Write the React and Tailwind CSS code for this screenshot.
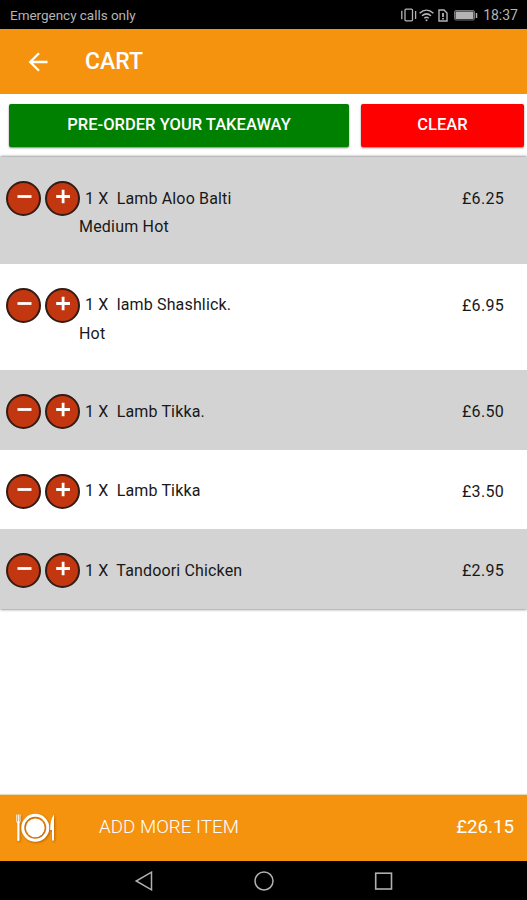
const items = [
  { name: 'Lamb Aloo Balti', note: 'Medium Hot', price: '£6.25' },
  { name: 'lamb Shashlick.', note: 'Hot', price: '£6.95' },
  { name: 'Lamb Tikka.', price: '£6.50' },
  { name: 'Lamb Tikka', price: '£3.50' },
  { name: 'Tandoori Chicken', price: '£2.95' },
];

function StatusBar() {
  return (
    <div className="flex h-[29px] shrink-0 items-center justify-between bg-black pl-2.5 pr-[9px] pt-px text-[13.5px] text-[#b4b4b4]">
      <span className="tracking-[-0.03px]">Emergency calls only</span>
      <div className="flex items-center">
        <svg width="17" height="14" viewBox="0 0 17 14" fill="none" stroke="currentColor" strokeWidth="1.3">
          <rect x="5" y="1.2" width="7.5" height="11.6" rx="1" />
          <path d="M1.8 2.8v8.4M15.6 3v8" />
        </svg>
        <svg className="ml-0.5" width="15" height="13" viewBox="0 0 15 13" fill="none" stroke="currentColor" strokeWidth="1.5">
          <path d="M.6 4.2C4.8.4 10.2.4 14.4 4.2M3 6.8c2.8-2.4 6.2-2.4 9 0M5.3 9.2c1.4-1.2 3-1.2 4.4 0" />
          <circle cx="7.5" cy="11.2" r="1" fill="currentColor" stroke="none" />
        </svg>
        <svg className="ml-1" width="10" height="13" viewBox="0 0 10 13" fill="none" stroke="currentColor" strokeWidth="1.4">
          <path d="M1 1h5l3 3v8H1z" />
          <path d="M5 4v4M5 9v1.5" strokeWidth="1.8" />
        </svg>
        <svg className="ml-1.5" width="24" height="11" viewBox="0 0 24 11" fill="none" stroke="currentColor">
          <rect x="0.5" y="0.5" width="20" height="9.5" rx="1.5" stroke="#777" />
          <rect x="1.5" y="1.5" width="18" height="7.5" fill="currentColor" stroke="none" />
          <path d="M22.5 3v5" strokeWidth="1.5" />
        </svg>
        <span className="ml-[5px] text-sm">18:37</span>
      </div>
    </div>
  );
}

function QtyButton({ label, plus }) {
  return (
    <button aria-label={label} className="flex size-[35px] items-center justify-center rounded-full border-2 border-[#331c16] bg-[#c23610]">
      <svg className="size-[31px]" viewBox="0 0 31 31" fill="none" stroke="white" strokeWidth="2.8">
        <path d={plus ? 'M9.2 13.5H23M16.1 6.7v13.6' : 'M9.5 13.5h14'} />
      </svg>
    </button>
  );
}

function CartRow({ item, shaded, height }) {
  return (
    <div className={`flex items-start justify-between pl-1.5 pr-[23px] ${height} ${shaded ? 'bg-[#d3d3d3]' : 'bg-white'}`}>
      <div>
        <div className="flex items-center gap-[3.5px]">
          <QtyButton label="Remove one" />
          <QtyButton label="Add one" plus />
          <span className="ml-0.5 whitespace-pre tracking-[0.15px]">{`1 X  ${item.name}`}</span>
        </div>
        {item.note && <div className="ml-[73px] leading-[22px] tracking-[0.2px]">{item.note}</div>}
      </div>
      <span className="leading-[35px] tracking-[0.3px]">{item.price}</span>
    </div>
  );
}

function PlateIcon() {
  return (
    <svg className="drop-shadow-[1px_1px_1px_#b86500]" width="40" height="32" viewBox="0 0 40 32" fill="none" stroke="white">
      <circle cx="20.3" cy="15.8" r="12.5" strokeWidth="3" />
      <circle cx="20.3" cy="15.8" r="9.4" fill="white" stroke="none" />
      <path d="M1.8 2.5v7q0 1.5 1.6 1.5t1.6-1.5v-7M3.4 2.5V11" strokeWidth="1" />
      <path d="M3.4 10v18" strokeWidth="2.2" strokeLinecap="round" />
      <path d="M39 2.5v26h-2V18h-1.8c0-7 1-12 3.8-15.5z" fill="white" stroke="none" />
    </svg>
  );
}

function NavBar() {
  return (
    <div className="flex h-[39px] shrink-0 items-center justify-center gap-[100px] bg-black text-[#b0b0b0]">
      <svg width="20" height="20" viewBox="0 0 20 20" fill="none" stroke="currentColor" strokeWidth="1.5">
        <path d="M17.5 1.2v17.6L2.2 10z" />
      </svg>
      <svg width="20" height="20" viewBox="0 0 20 20" fill="none" stroke="currentColor" strokeWidth="1.5">
        <circle cx="10" cy="10" r="9" />
      </svg>
      <svg width="20" height="20" viewBox="0 0 20 20" fill="none" stroke="currentColor" strokeWidth="1.6">
        <rect x="1.7" y="2.2" width="15.8" height="15.8" />
      </svg>
    </div>
  );
}

export default function App() {
  return (
    <div className="flex h-[900px] w-[527px] flex-col overflow-hidden bg-white font-[Roboto,sans-serif] text-[#181818]">
      <StatusBar />
      <header className="flex h-[65px] shrink-0 items-center bg-[#f5930f] pl-7 text-white">
        <svg width="20" height="20" viewBox="0 0 20 20" fill="none" stroke="currentColor" strokeWidth="2.3">
          <path d="M19.5 10H2M11 1.2L2.2 10l8.8 8.8" />
        </svg>
        <h1 className="ml-[37px] pt-0.5 text-[23px] font-medium">CART</h1>
      </header>

      <div className="flex h-[63px] shrink-0 gap-3 pl-[9px] pr-[3px] pt-2.5 text-[16.5px] font-medium text-white">
        <button className="h-[42.5px] w-[340px] rounded-xs bg-[#008000] pt-px tracking-[0.02px] shadow-[0_1px_2px_rgba(0,0,0,0.5)]">
          PRE-ORDER YOUR TAKEAWAY
        </button>
        <button className="h-[42.5px] flex-1 rounded-xs bg-[#ff0000] pt-px shadow-[0_1px_2px_rgba(0,0,0,0.5)]">CLEAR</button>
      </div>

      <main className="shrink-0 text-base shadow-[0_0_3px_rgba(0,0,0,0.7)]">
        {items.map((item, i) => (
          <CartRow
            key={item.name}
            item={item}
            shaded={i % 2 === 0}
            height={item.note ? 'h-[106.5px] pt-6' : 'h-[79.6px] pt-6'}
          />
        ))}
      </main>

      <div className="flex-1" />
      <footer className="flex h-[66px] shrink-0 items-center bg-[#f5930f] pl-[15px] pr-[13px] text-[18.7px] text-white shadow-[0_-1px_1px_#e8d9bd]">
        <PlateIcon />
        <span className="ml-11 pb-px font-light tracking-[0.05px]">ADD MORE ITEM</span>
        <span className="ml-auto pb-px">£26.15</span>
      </footer>
      <NavBar />
    </div>
  );
}
